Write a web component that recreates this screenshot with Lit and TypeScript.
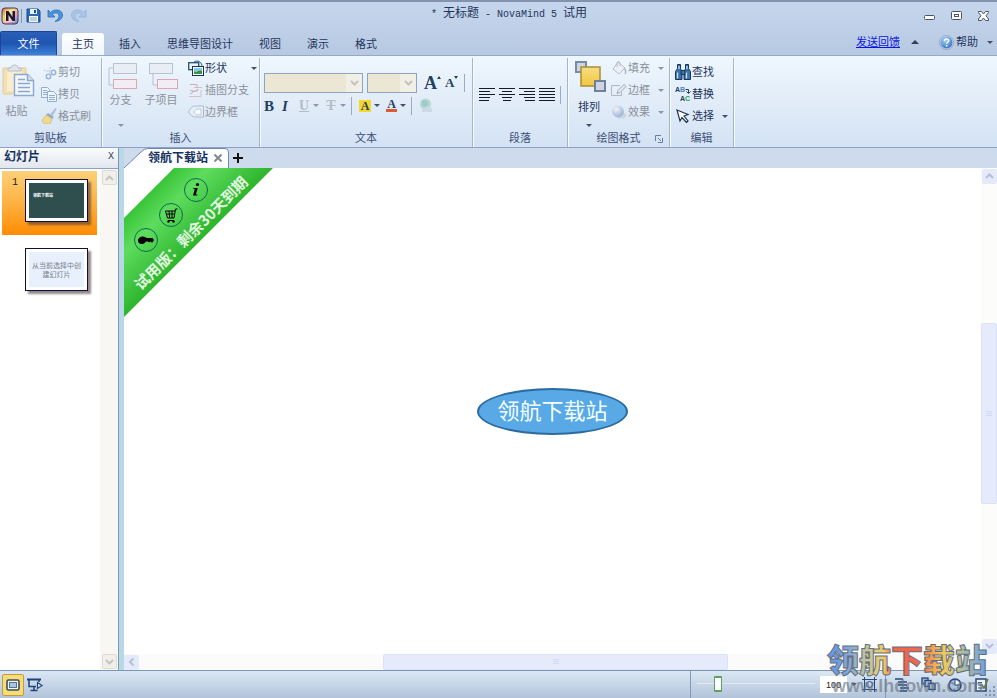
import { LitElement, html, svg, css, TemplateResult, SVGTemplateResult } from "lit";
import { customElement, state } from "lit/decorators.js";
import { classMap } from "lit/directives/class-map.js";

type Icon = { w: number; h: number; art: SVGTemplateResult };

const lines = (rows: number[][], color: string) =>
  rows.map(([x, y, w]) => svg`<rect x=${x} y=${y} width=${w} height="1" fill=${color}/>`);

const ICONS: Record<string, Icon> = {
  logo: { w: 18, h: 18, art: svg`<defs><linearGradient id="lg" x1="0" y1="0" x2="1" y2="1"><stop offset="0" stop-color="#e2574c"/><stop offset=".35" stop-color="#f3dc6a"/><stop offset=".65" stop-color="#e8a0c0"/><stop offset="1" stop-color="#4a8fd8"/></linearGradient></defs><rect x="1" y="1" width="16" height="16" rx="3" fill="url(#lg)" stroke="#4b3b50"/><rect x="4" y="3" width="10" height="12" fill="#fff" opacity=".4"/><path d="M5 14V4h2.500l4 6V4H14v10h-2.500l-4-6v6z" fill="#1c1a2c"/>` },
  save: { w: 15, h: 15, art: svg`<path d="M1 1h11l2 2v11H1z" fill="#2868b4" stroke="#1c4c8c"/><rect x="4" y="1" width="7" height="5" fill="#e8f0fa"/><rect x="8" y="2" width="2" height="3" fill="#1c4c8c"/><rect x="3" y="8" width="9" height="6" fill="#f4f8fc"/><path d="M4 10h7M4 12h7" stroke="#8aa6c8"/>` },
  undo: { w: 17, h: 14, art: svg`<path d="M1 1v7h7L5.500 5.500C8 3 12 3.500 12 7c0 2.500-2 4-4 5.500 4-.5 7.500-2.500 7.500-6.500C15.500 1 8-1 3.500 3.500z" fill="#4b94dc" stroke="#2c6cb4" stroke-width=".8"/>` },
  redo: { w: 17, h: 14, art: svg`<path d="M16 1v7H9l2.500-2.500C9 3 5 3.500 5 7c0 2.500 2 4 4 5.500C5 12 1.500 10 1.500 6 1.500 1 9-1 13.500 3.500z" fill="#a9c6e8" stroke="#90b2da" stroke-width=".8"/>` },
  min: { w: 11, h: 12, art: svg`<rect x=".5" y="5.500" width="10" height="4" rx="1" fill="#fff" stroke="#4a5468"/>` },
  max: { w: 11, h: 10, art: svg`<rect x=".5" y=".5" width="10" height="8" rx="1" fill="#fff" stroke="#4a5468"/><rect x="3.500" y="3.500" width="4" height="2" fill="#fff" stroke="#4a5468"/>` },
  close: { w: 11, h: 10, art: svg`<path d="M.5.5h3l2 2.500 2-2.500h3v1L8 4.800l2.500 3.200v1.500h-3l-2-2.500-2 2.500h-3V8L3 4.800.5 1.500z" fill="#fff" stroke="#4a5468"/>` },
  help: { w: 15, h: 15, art: svg`<defs><radialGradient id="hg" cx=".4" cy=".3" r=".8"><stop offset="0" stop-color="#a8d4f8"/><stop offset="1" stop-color="#2c6cc0"/></radialGradient></defs><circle cx="7.500" cy="7.500" r="7" fill="#d3e0f0" stroke="#8fa4c0"/><circle cx="7.500" cy="7.500" r="6" fill="url(#hg)"/><path d="M5.500 6c0-3 4.200-2.500 4.200-.3 0 1.500-2 1.500-2 3.100M7.700 10v1.400" fill="none" stroke="#fff" stroke-width="1.400"/>` },
  paste: { w: 33, h: 34, art: svg`<rect x="1" y="4" width="23" height="26" rx="1" fill="#f3dfb2" stroke="#e2cb98"/><rect x="5" y="7" width="15" height="20" fill="#f9edd0"/><path d="M6 7V4h3c0-4 7-4 7 0h3v3z" fill="#dfe4ec" stroke="#b4bfce"/><path d="M12.500 10.500h13l6 6v15h-19z" fill="#f1f6fd" stroke="#8ca8cf" stroke-width="1.400"/><path d="M25.500 10.500v6h6" fill="#d5e2f3" stroke="#8ca8cf" stroke-width="1.400"/><path d="M16 15.500h7M16 19.500h12M16 23.500h12M16 27.500h12" stroke="#8ca8cf" stroke-width="1.600"/>` },
  cut: { w: 16, h: 15, art: svg`<g fill="none" stroke="#9bb5d8" stroke-width="1.500"><circle cx="7.500" cy="11.500" r="2.200"/><circle cx="12.500" cy="7.500" r="2.200"/></g><path d="M8 9.500 9.500 2M10.500 7 2 5" stroke="#c3cedc" stroke-width="1.200" stroke-dasharray="2 1"/>` },
  copy: { w: 16, h: 15, art: svg`<g fill="#eef4fc" stroke="#93add0"><path d="M.5.5h6l2 2v8h-8z"/><path d="M6.500 4.500h6l3 3v7h-9z"/></g><path d="M2 3.500h4M2 5.500h4M2 7.500h4M8 8.500h6M8 10.500h6M8 12.500h6" stroke="#93add0"/>` },
  brush: { w: 16, h: 16, art: svg`<path d="M14.500 0 9.500 6l2 2 4-7z" fill="#a9bdd8"/><path d="m7 5 6 4-2 2-6-4z" fill="#8fa9cd"/><path d="M5 7 1 13l2 2.500 6 .5 2-5z" fill="#efd98e" stroke="#dcc47a"/>` },
  branch: { w: 30, h: 28, art: svg`<path d="M5 5H1v17h4" fill="none" stroke="#b9c0ce"/><rect x="5.500" y=".5" width="23" height="10" fill="#e9eef6" stroke="#b9c0ce"/><rect x="5.500" y="16.500" width="23" height="9" fill="#f2edf4" stroke="#dca7b4"/>` },
  child: { w: 30, h: 28, art: svg`<path d="M4 10v12h5" fill="none" stroke="#b9c0ce"/><rect x=".5" y=".5" width="23" height="10" fill="#e9eef6" stroke="#b9c0ce"/><rect x="8.500" y="16.500" width="20" height="9" fill="#f2edf4" stroke="#dca7b4"/>` },
  shapes: { w: 16, h: 16, art: svg`<circle cx="9" cy="6" r="5" fill="#e8f1fa" stroke="#2f5b78"/><rect x=".7" y="2.700" width="10" height="7" fill="#edf5fc" stroke="#27506e" stroke-width="1.300"/><rect x="4.500" y="6.500" width="11" height="9" fill="#fff" stroke="#173550"/><rect x="6" y="8" width="8" height="3" fill="#7ecbe8"/><path d="M6 14v-3c3 2 5-2 8 0v3z" fill="#3d8e3d"/>` },
  callout: { w: 16, h: 15, art: svg`<path d="M2 1.500h7v3" fill="none" stroke="#d9a9b4"/><path d="M1 13.500h12V7M6 4.500h8" fill="none" stroke="#cfc0cc"/><path d="M4 10c2-5 4 1 6-4" fill="none" stroke="#d9a9b4" stroke-width="1.400"/><path d="M2 7.500h3M2 10.500h2" stroke="#b9c0ce"/>` },
  boundary: { w: 16, h: 14, art: svg`<path d="M.5 7c2-4 4-6 7-6h8v11h-8c-3 0-5-2-7-5z" fill="#e6eef8" stroke="#aab9d0"/><path d="M6 7c1-2 2-3 4-3h3v6h-3c-2 0-3-1-4-3z" fill="#f5f8fd" stroke="#c0cbdd"/>` },
  globe: { w: 14, h: 15, art: svg`<circle cx="6.500" cy="6" r="5.500" fill="#b4dac8"/><path d="M3 3c2-2 5-1 6 1s-1 5-3 5S2 6 3 3" fill="#9ccbd0"/><path d="M7 9c2-2 5 0 6 2v3H3v-2z" fill="#cbd9e8"/>` },
  left: { w: 17, h: 14, art: svg`${lines([[0, 0, 16], [0, 3, 11], [0, 6, 16], [0, 9, 11], [0, 12, 10]], "#151b26")}` },
  center: { w: 17, h: 14, art: svg`${lines([[0, 0, 16], [3, 3, 10], [0, 6, 16], [3, 9, 10], [4, 12, 8]], "#151b26")}` },
  right: { w: 17, h: 14, art: svg`${lines([[0, 0, 16], [5, 3, 11], [0, 6, 16], [5, 9, 11], [6, 12, 10]], "#151b26")}` },
  justify: { w: 17, h: 14, art: svg`${lines([[0, 0, 16], [0, 3, 16], [0, 6, 16], [0, 9, 16], [0, 12, 16]], "#151b26")}` },
  arrange: { w: 32, h: 34, art: svg`<rect x="1" y="1" width="10" height="10" fill="#cdd5e2" stroke="#7a8aa5" stroke-width="2"/><defs><linearGradient id="yg" x1="0" y1="0" x2="0" y2="1"><stop offset="0" stop-color="#f7dd83"/><stop offset="1" stop-color="#f1c73f"/></linearGradient></defs><rect x="6" y="6" width="19" height="19" fill="url(#yg)" stroke="#a98d38" stroke-width="1.500"/><rect x="20" y="20" width="10" height="10" fill="#cdd5e2" stroke="#6f7f9c" stroke-width="2"/>` },
  fill: { w: 16, h: 14, art: svg`<path d="m7 1 7 6-6 6-6-5z" fill="#eceff4" stroke="#b7bec9"/><path d="M6 6V2c0-2 3-2 3 0v3" fill="none" stroke="#b7bec9"/><path d="M13 7c2 2 2 5 1 6" stroke="#a3b8d2" stroke-width="1.500" fill="none"/>` },
  outline: { w: 16, h: 13, art: svg`<path d="M9 1.500H.5v10h10V8" fill="none" stroke="#b0b8c6"/><path d="m6 9.500 1-3L13 .5l2 2-6 6z" fill="#e6ebf2" stroke="#9fa9b8"/>` },
  effect: { w: 16, h: 14, art: svg`<defs><radialGradient id="eg" cx=".35" cy=".3" r=".8"><stop offset="0" stop-color="#eef3fa"/><stop offset="1" stop-color="#93abd0"/></radialGradient></defs><ellipse cx="10" cy="10.500" rx="5.500" ry="3.300" fill="#ccd5e2"/><circle cx="7" cy="6.500" r="5.800" fill="url(#eg)"/>` },
  launcher: { w: 8, h: 8, art: svg`<path d="M.5 6V.5H6" fill="none" stroke="#6c7f9f"/><path d="M3 3l3 3M7.500 3v4.500H3" fill="none" stroke="#6c7f9f"/>` },
  find: { w: 16, h: 16, art: svg`<g fill="#3d73a8" stroke="#15365e"><path d="M2.500.5h3v4l1.500 3v8H.5v-8l2-3z"/><path d="M10.500.5h3v4l2 3v8H9v-8l1.500-3z"/><path d="M6 6.500h4v4H6z"/></g><path d="M2.500 8.500v6M11.500 8.500v6M4 2v3M12 2v3" stroke="#c6dff2" stroke-width="1.300"/>` },
  replace: { w: 16, h: 16, art: svg`<g font-family="Liberation Sans" font-weight="bold" font-size="7"><text x="0" y="6" fill="#1e3c66">A</text><text x="5" y="6" fill="#4a84c4">B</text><text x="5" y="15" fill="#1e3c66">A</text><text x="10" y="15" fill="#2f9e4f">C</text></g><path d="M10.500 3.500h3V7m-2-1.500 2 2 2-2" fill="none" stroke="#1e3c66"/>` },
  select: { w: 14, h: 14, art: svg`<path d="m1 1 11 4.500-4 1.500 4 5-1.500 1.500-4.500-5L4 12z" fill="#fff" stroke="#1e3550" stroke-width="1.200"/>` },
  slides: { w: 14, h: 12, art: svg`<rect x="1" y="1" width="12" height="10" rx="1.500" fill="#fdf6cf" stroke="#33506e" stroke-width="1.600"/><rect x="3.500" y="3.500" width="7" height="5" fill="#aac4e2" stroke="#4f759f"/>` },
  present: { w: 17, h: 14, art: svg`<path d="M0 1.500h14" stroke="#1f4379" stroke-width="2"/><path d="M2 2v6.500h7M12 2v2M7 9v3M3.500 12.500h7" fill="none" stroke="#1f4379" stroke-width="1.500"/><path d="m10.500 4.500 4.500 3-4.500 3z" fill="#e4ecf6" stroke="#1f4379" stroke-width="1.200"/>` },
  fit: { w: 15, h: 15, art: svg`<rect x="2.500" y="2.500" width="10" height="10" fill="#c6d7ea" stroke="#24487c"/><circle cx="7.500" cy="7.500" r="3" fill="none" stroke="#24487c"/><path d="M0 2.500h2M2.500 0v2M12.500 0v2M13 2.500h2M0 12.500h2M2.500 13v2M12.500 13v2M13 12.500h2" stroke="#24487c"/>` },
  outlineView: { w: 14, h: 14, art: svg`<path d="M0 1h8M3 4h9M3 7h9M5 10h9M5 13h7" stroke="#24487c" stroke-width="1.600"/>` },
  linkView: { w: 15, h: 15, art: svg`<g fill="#9fb9d8" stroke="#24487c" stroke-width="1.300"><rect x="1" y="1" width="6" height="6"/><rect x="4" y="3.500" width="6" height="6"/><rect x="8" y="6.500" width="6" height="6"/></g>` },
  clock: { w: 15, h: 14, art: svg`<circle cx="7" cy="7" r="6" fill="#a9c3e0" stroke="#24487c" stroke-width="1.600"/><path d="M7 7V1.500A5.500 5.500 0 0 1 12.500 7z" fill="#fff" stroke="#24487c"/>` },
  note: { w: 14, h: 14, art: svg`<rect x="1" y="1" width="10" height="12" fill="#eef4fb" stroke="#24487c" stroke-width="1.500"/><path d="M3 4.500h4M3 7h5M3 10h5" stroke="#24487c"/><path d="m7 7 2 3 4-9" fill="none" stroke="#6a7d3c" stroke-width="1.600"/>` },
  grip: { w: 10, h: 10, art: svg`<path d="M8 0h2v2H8zM4 4h2v2H4zM8 4h2v2H8zM0 8h2v2H0zM4 8h2v2H4zM8 8h2v2H8z" fill="#8397b4"/>` },
  info: { w: 24, h: 24, art: svg`<circle cx="12" cy="12" r="11.500" fill="none" stroke="#0b6b4f"/><circle cx="13.500" cy="6.500" r="1.600"/><path d="M9.500 10h4.300l-2 6.500h1.800l-.3 1H9l1.800-6.500H9.300z"/>` },
  cart: { w: 24, h: 24, art: svg`<circle cx="12" cy="12" r="11.500" fill="none" stroke="#0b6b4f"/><path d="M18.500 6h-2l-1.500 9H8.500L6.500 8H16M7.500 11h8M10 8l.7 7M13 8v7M15 17.500H9" fill="none" stroke="#000"/><circle cx="9.500" cy="18.500" r="1.200"/><circle cx="14.500" cy="18.500" r="1.200"/>` },
  key: { w: 24, h: 24, art: svg`<circle cx="12" cy="12" r="11.500" fill="none" stroke="#0b6b4f"/><path d="M4 13c0-3.500 3-4.500 5-4.500s3 1.200 4 1.500h5.500l1.500 2-1.500 2.500h-1l-1-1-1.500 1-1-1h-2c-1 2-3 2.500-4.500 2.500S4 15 4 13z"/>` },
  chev: { w: 9, h: 6, art: svg`<path d="m1 1 3.500 3.500L8 1" fill="none" stroke="currentColor" stroke-width="2"/>` },
};

const icon = (name: string, cls = "") => {
  const i = ICONS[name];
  return html`<svg class="ico ${cls}" width=${i.w} height=${i.h} viewBox="0 0 ${i.w} ${i.h}" aria-hidden="true">${i.art}</svg>`;
};
const drop = (cls = "") => html`<span class="drop ${cls}"></span>`;

const TABS = ["主页", "插入", "思维导图设计", "视图", "演示", "格式"];

@customElement("app-root")
export class AppRoot extends LitElement {
  @state() private tab = "主页";

  static styles = css`
    :host {
      display: flex; flex-direction: column; height: 100vh; overflow: hidden; position: relative;
      background: #fff; color: #1f355c;
      font: 11px/16px "Liberation Sans", "Noto Sans CJK SC", sans-serif;
    }
    * { box-sizing: border-box; }
    button, select, input { font: inherit; color: inherit; margin: 0; padding: 0; border: 0; background: none; }
    button { display: flex; align-items: center; white-space: nowrap; }
    .ico { display: block; flex: none; }
    .grow { flex: 1; }
    .off { color: #8b909a; }
    .drop { border: 3px solid transparent; border-top-color: #44506a; border-bottom: 0; flex: none; }
    .drop.up { border-top: 0; border-bottom: 4px solid #333f55; border-left-width: 4px; border-right-width: 4px; }
    .drop.pale { border-top-color: #8d97a8; }

    .head { background: linear-gradient(#c5d6ec, #b7c9e2); border-top: 2px solid #8393ae; border-bottom: 1px solid #96a8c6; }
    .titlebar { display: grid; grid-template-columns: 1fr auto 1fr; align-items: center; height: 27px; padding: 0 8px 0 1px; }
    .quick, .win { display: flex; align-items: center; gap: 6px; }
    .quick .bar { width: 1px; height: 14px; background: #8496b4; margin: 0 -2px 0 -4px; }
    .win { justify-content: flex-end; gap: 16px; }
    h1 { margin: 0 0 4px; font: 12px/16px "Noto Sans CJK SC", sans-serif; padding-left: 28px; }
    h1 .latin { font: 10px/16px "Liberation Mono", monospace; white-space: pre; }
    .tabs { display: flex; align-items: flex-end; height: 26px; padding-right: 4px; }
    .tab { height: 22px; padding: 0 13px; }
    .tab.on { padding: 0 10px; margin-right: 2px; background: linear-gradient(#fff, #eef6fd); border-radius: 3px 3px 0 0; }
    .file { width: 57px; height: 24px; justify-content: center; margin-right: 5px; color: #fff; border: 1px solid #1b4697; border-bottom: 0; border-radius: 2px 2px 0 0; background: linear-gradient(#2a5fb8, #1e55b0 50%, #3f83dc); }
    .aside { display: flex; align-items: center; align-self: center; height: 20px; }
    .aside a { color: #0a16e0; }
    .aside .up { margin: 0 20px 0 11px; }
    .help { gap: 2px; }
    .help .drop { margin-left: 7px; }

    .ribbon { display: flex; height: 92px; flex: none; background: linear-gradient(#eff7fe, #dde9f6 65%, #d3e2f4); border-bottom: 1px solid #8da2c4; }
    .group { display: flex; flex-direction: column; border-right: 1px solid #a4b5cf; box-shadow: 1px 0 #f7fbff; margin-top: 2px; }
    .group h2 { display: flex; align-items: center; justify-content: center; margin: 0; height: 18px; flex: none; font: inherit; color: #3b4f75; position: relative; }
    .group h2 button { position: absolute; right: 6px; bottom: 4px; }
    .body { display: flex; height: 71px; flex: none; }
    .clip { width: 102px; } .ins { width: 158px; } .txt { width: 213px; } .par { width: 95px; } .drw { width: 102px; } .edt { width: 64px; }
    .big { flex-direction: column; height: 71px; }
    .big .drop { margin-top: auto; margin-bottom: 2px; }
    .col { display: flex; flex-direction: column; }
    .col button { height: 22px; gap: 1px; }
    .col .slot { width: 16px; display: flex; justify-content: center; }
    .col .drop { margin-left: auto; }
    .clip .big { width: 33px; padding-top: 6px; gap: 5px; }
    .clip .big .ico { margin-left: 4px; }
    .clip .col { padding: 3px 0 0 8px; }
    .ins .big { width: 37px; padding-top: 5px; gap: 1px; }
    .ins .big .ico { margin-left: 5px; }
    .ins .big + .big { width: 44px; }
    .ins .col { width: 69px; margin-left: 5px; margin-top: -1px; }
    .drw .big { width: 38px; padding-top: 3px; gap: 4px; margin-left: 2px; }
    .drw .big .ico { margin-left: 4px; }
    .drw .col { width: 53px; margin-left: 3px; margin-top: -1px; }
    .edt .col { width: 53px; margin: 3px 0 0 5px; }

    .txt .body { flex-direction: column; padding: 14px 0 0 4px; gap: 2px; }
    .row { display: flex; align-items: center; height: 21px; }
    .combo { position: relative; height: 20px; border: 1px solid #8ea6bd; background: #ece7d5; margin-right: 4px; }
    .combo select { appearance: none; width: 100%; height: 100%; }
    .combo i { position: absolute; right: 0; top: 0; bottom: 0; width: 16px; display: grid; place-items: center; background: #f2efe6; color: #c6c3b8; pointer-events: none; }
    .family { width: 100px; } .size { width: 50px; }
    .serif { font-family: "Liberation Serif", serif; font-weight: bold; color: #24405f; }
    .bigA { font-size: 18px; width: 16px; margin-left: 3px; } .smallA { font-size: 13px; width: 14px; margin-left: 5px; }
    .mark { align-self: flex-start; border: 2px solid transparent; border-top: 0; border-bottom: 3px solid #24405f; margin-top: 1px; }
    .mark.down { border-bottom: 0; border-top: 3px solid #24405f; }
    .bi { font-size: 15px; width: 16px; }
    .it { font-style: italic; padding-left: 2px; }
    .pale { color: #b4bcc8; }
    .u { font-size: 14px; width: 12px; justify-content: center; margin-left: 2px; text-decoration: underline; }
    .st { text-decoration: line-through; margin-left: 6px; }
    .row .drop { margin-left: 3px; }
    .sep { width: 1px; height: 18px; background: #9aaac4; margin: 0 7px 0 5px; }
    .hl { width: 12px; height: 12px; font-size: 12px; justify-content: center; background: #f4d62c; }
    .fc { width: 11px; height: 12px; font-size: 12px; justify-content: center; border-bottom: 3px solid #dc5a34; margin-left: 6px; line-height: 8px; }
    .par .body { align-items: center; padding: 3px 0 0 6px; gap: 3px; }
    .par .sep { margin: 0 0 0 1px; }

    .work { display: flex; flex: 1; min-height: 0; }
    .panel { width: 119px; display: flex; flex-direction: column; border-right: 1px solid #7c98b4; }
    .panel header { display: flex; justify-content: space-between; align-items: center; height: 21px; padding: 0 4px 2px; background: linear-gradient(#fafbfd, #e2e6ee); border-bottom: 1px solid #8ba1bd; color: #16335f; }
    .panel header b { font-size: 12px; }
    .panel header button { font: 10px/16px "Liberation Mono", monospace; color: #30435f; }
    .pane { display: flex; flex: 1; min-height: 0; }
    .list { flex: 1; padding: 2px 3px 0 2px; display: flex; flex-direction: column; gap: 5px; }
    .slide { position: relative; height: 64px; width: 100%; padding: 8px 0 0 23px; align-items: flex-start; color: #222; }
    .slide.on { background: linear-gradient(#fdd078, #fdb548 45%, #ff8c04); }
    .slide .n { position: absolute; left: 10px; top: 4px; font: 10px/16px "Liberation Mono", monospace; }
    .thumb { width: 63px; height: 43px; border: 1px solid #150c38; padding: 3px; background: #fff; box-shadow: 3px 3px 2px #4a3a3a99; }
    .shot { display: block; height: 35px; background: #2f4f4f; color: #fff; text-align: left; padding: 9px 0 0 4px; font-size: 4px; line-height: 8px; font-weight: bold; }
    .new { display: grid; place-content: center; height: 35px; background: #e8f0fd; color: #7b8088; font-size: 7px; line-height: 9px; text-align: center; }
    .split { width: 5px; background: #b8d8e6; }

    .sbtn { display: grid; place-items: center; width: 15px; height: 15px; flex: none; border-radius: 2px; background: #e4eafa; color: #b4c0da; }
    .vs { display: grid; width: 16px; grid-template-rows: 16px 139fr 180fr 134fr 16px; background: #fcfcfa; justify-items: center; align-items: center; }
    .hs { display: grid; height: 16px; grid-template-columns: 16px 243fr 345fr 238fr 16px 15px; background: #fbfbfb; align-items: center; }
    .thumbbar { display: grid; place-items: center; width: 100%; height: 100%; border-radius: 2px; background: #e6ebfc; border: 1px solid #dbe2f7; }
    .thumbbar i { width: 6px; height: 6px; background: repeating-linear-gradient(#d0d9f2 0 1px, transparent 1px 2px); }
    .side { width: 18px; display: flex; flex-direction: column; justify-content: space-between; padding: 1px 2px; background: #f8f7f3; }
    .side .sbtn { background: #f0efe9; color: #c5c4bf; border: 1px solid #dedcd5; }
    .upside { transform: rotate(180deg); } .leftside { transform: rotate(90deg); }

    .doc { flex: 1; display: flex; flex-direction: column; min-width: 0; }
    .docs { display: flex; height: 20px; background: #cddbed; }
    .doctab { display: flex; align-items: center; height: 20px; width: 105px; padding: 0 7px 1px 24px; gap: 4px; position: relative; color: #16335f; font-weight: bold; font-size: 12px; justify-content: space-between; white-space: nowrap; }
    .doctab svg.shape { position: absolute; inset: 0; }
    .doctab > * { position: relative; }
    .plus { padding: 0 4px; }
    .view { flex: 1; display: flex; min-height: 0; }
    .canvas { flex: 1; display: grid; place-items: center; position: relative; }
    .ribbonmark { position: absolute; left: 0; top: 0; }
    .trial { font: bold 15px "Noto Sans CJK SC", sans-serif; fill: #e2f8e0; }
    .node { width: 151px; height: 47px; padding-bottom: 4px; display: grid; place-items: center; border: 2px solid #2b6ba0; border-radius: 50%; background: #58a9e6; color: #f4feff; font: 22px/28px "Noto Sans CJK SC", sans-serif; }

    .status { display: flex; align-items: center; height: 28px; flex: none; padding: 0 2px; border-top: 1px solid #7c96b6; background: linear-gradient(#dbe7f4, #b2c4da); position: relative; }
    .modes { display: flex; gap: 3px; align-items: center; }
    .modes button:first-child { width: 22px; height: 22px; justify-content: center; background: #f8dc74; border: 1px solid #c49a3c; border-radius: 2px; }
    .status .line { width: 1px; height: 27px; background: #8399b8; }
    .zoom { appearance: none; width: 118px; height: 18px; margin: 0 5px 2px 6px; }
    .zoom::-webkit-slider-runnable-track { height: 16px; background: linear-gradient(#e2eaf4, #e2eaf4) center / 100% 1px no-repeat; }
    .zoom::-webkit-slider-thumb { appearance: none; width: 8px; height: 16px; background: #fff; border: 1px solid #5fa05f; border-width: 2px 1px; border-radius: 1px; }
    .pct { width: 27px; height: 17px; background: #fff; text-align: center; color: #222; font-size: 9px; }
    .views { display: flex; align-items: center; gap: 12px; padding: 0 6px 0 8px; }
    .views .line { margin-right: -3px; }
    .spin { display: grid; padding: 0 5px 0 4px; }
    .grip { position: absolute; right: 2px; bottom: 2px; }
    .wm { position: absolute; right: 4px; bottom: 0; pointer-events: none; }
    .wm .cn { font: 900 32px "Noto Sans CJK SC", sans-serif; }
    .wm .url { font: bold 18px "Liberation Sans", sans-serif; }
  `;

  private item(name: string, label: string, off = false, arrow = false): TemplateResult {
    return html`<button class=${classMap({ off })}><span class="slot">${icon(name)}</span>${label}${arrow ? drop(off ? "pale" : "") : ""}</button>`;
  }

  private ribbon() {
    return html`<section class="ribbon">
      <div class="group clip"><div class="body">
        <button class="big off">${icon("paste")}粘贴</button>
        <div class="col">${this.item("cut", "剪切", true)}${this.item("copy", "拷贝", true)}${this.item("brush", "格式刷", true)}</div>
      </div><h2>剪贴板</h2></div>
      <div class="group ins"><div class="body">
        <button class="big off">${icon("branch")}分支${drop("pale")}</button>
        <button class="big off">${icon("child")}子项目</button>
        <div class="col">${this.item("shapes", "形状", false, true)}${this.item("callout", "插图分支", true)}${this.item("boundary", "边界框", true)}</div>
      </div><h2>插入</h2></div>
      <div class="group txt"><div class="body">
        <div class="row">
          <div class="combo family"><select aria-label="字体" disabled></select><i>${icon("chev")}</i></div>
          <div class="combo size"><select aria-label="字号" disabled></select><i>${icon("chev")}</i></div>
          <button class="serif bigA" aria-label="增大字号">A<span class="mark"></span></button>
          <button class="serif smallA" aria-label="减小字号">A<span class="mark down"></span></button>
          <span class="sep"></span>
        </div>
        <div class="row">
          <button class="serif bi">B</button><button class="serif bi it">I</button>
          <button class="serif u pale">U</button>${drop("pale")}
          <button class="serif u st pale">T</button>${drop("pale")}
          <span class="sep"></span>
          <button class="serif hl">A</button>${drop()}
          <button class="serif fc">A</button>${drop()}
          <span class="sep"></span>
          <button aria-label="超链接">${icon("globe")}</button>
        </div>
      </div><h2>文本</h2></div>
      <div class="group par"><div class="body">
        ${[["left", "左对齐"], ["center", "居中"], ["right", "右对齐"], ["justify", "两端对齐"]].map(([i, l]) => html`<button aria-label=${l}>${icon(i)}</button>`)}
        <span class="sep"></span>
      </div><h2>段落</h2></div>
      <div class="group drw"><div class="body">
        <button class="big">${icon("arrange")}排列${drop()}</button>
        <div class="col">${this.item("fill", "填充", true, true)}${this.item("outline", "边框", true, true)}${this.item("effect", "效果", true, true)}</div>
      </div><h2><span>绘图格式</span><button aria-label="更多格式">${icon("launcher")}</button></h2></div>
      <div class="group edt"><div class="body">
        <div class="col">${this.item("find", "查找")}${this.item("replace", "替换")}${this.item("select", "选择", false, true)}</div>
      </div><h2>编辑</h2></div>
    </section>`;
  }

  private watermark() {
    return html`<svg class="wm" width="168" height="74" viewBox="0 0 168 74" aria-hidden="true">
      <defs><linearGradient id="wg" gradientUnits="userSpaceOnUse" x1="0" y1="0" x2="162" y2="0">
        <stop offset="0" stop-color="#5b93ea"/><stop offset=".14" stop-color="#7ea6e0"/><stop offset=".24" stop-color="#b9c1a4"/>
        <stop offset=".36" stop-color="#f0cf66"/><stop offset=".42" stop-color="#f2664e"/><stop offset=".58" stop-color="#f2664e"/>
        <stop offset=".72" stop-color="#f6c850"/><stop offset=".84" stop-color="#b4bf9c"/><stop offset="1" stop-color="#6f9fe4"/>
      </linearGradient></defs>
      <text class="cn" x="2" y="48" fill="url(#wg)" stroke="#66707c" stroke-width="1">领航下载站</text>
      <text class="url" x="7" y="68" fill="#6a7584" fill-opacity=".65">www.lhdown.com</text>
    </svg>`;
  }

  render() {
    return html`
      <header class="head">
        <div class="titlebar">
          <div class="quick">${icon("logo")}<span class="bar"></span>
            <button aria-label="保存">${icon("save")}</button><button aria-label="撤销">${icon("undo")}</button><button aria-label="重做">${icon("redo")}</button></div>
          <h1><span class="latin">* </span>无标题<span class="latin"> - NovaMind 5 </span>试用</h1>
          <div class="win"><button aria-label="最小化">${icon("min")}</button><button aria-label="最大化">${icon("max")}</button><button aria-label="关闭">${icon("close")}</button></div>
        </div>
        <nav class="tabs">
          <button class="file">文件</button>
          ${TABS.map((t) => html`<button class=${classMap({ tab: true, on: t === this.tab })} @click=${() => (this.tab = t)}>${t}</button>`)}
          <span class="grow"></span>
          <div class="aside"><a href="#feedback">发送回馈</a>${drop("up")}<button class="help">${icon("help")}帮助${drop()}</button></div>
        </nav>
      </header>
      ${this.ribbon()}
      <main class="work">
        <aside class="panel">
          <header><b>幻灯片</b><button aria-label="关闭面板">X</button></header>
          <div class="pane">
            <div class="list">
              <button class="slide on"><span class="n">1</span><span class="thumb"><span class="shot">领航下载站</span></span></button>
              <button class="slide"><span class="thumb"><span class="new">从当前选择中创<br>建幻灯片</span></span></button>
            </div>
            <div class="side"><button class="sbtn" aria-label="向上">${icon("chev", "upside")}</button><button class="sbtn" aria-label="向下">${icon("chev")}</button></div>
          </div>
        </aside>
        <div class="split"></div>
        <section class="doc">
          <div class="docs">
            <div class="doctab">
              <svg class="shape" width="106" height="20"><path d="M0 20 17 4Q20 .5 24 .5H101Q104.500.5 104.500 4V20" fill="#fcfdff" stroke="#7089ae"/></svg>
              <span>领航下载站</span>
              <button aria-label="关闭文档"><svg width="8" height="8"><path d="M.5.5l7 7M7.500.5l-7 7" stroke="#83878f" stroke-width="2"/></svg></button>
            </div>
            <button class="plus" aria-label="新建文档"><svg width="10" height="10"><path d="M5 0v10M0 5h10" stroke="#111" stroke-width="2"/></svg></button>
          </div>
          <div class="view">
            <div class="canvas">
              <svg class="ribbonmark" width="150" height="150">
                <defs><linearGradient id="gg" gradientUnits="userSpaceOnUse" x1="25" y1="25" x2="75" y2="75">
                  <stop offset="0" stop-color="#38c438"/><stop offset=".35" stop-color="#5edc5e"/><stop offset="1" stop-color="#2cb42c"/></linearGradient></defs>
                <path d="M0 50 50 0H149L0 149z" fill="url(#gg)"/>
                <g transform="translate(60 10)">${ICONS.info.art}</g>
                <g transform="translate(35 35)">${ICONS.cart.art}</g>
                <g transform="translate(10 60)">${ICONS.key.art}</g>
                <text class="trial" transform="translate(17 123) rotate(-45)">试用版：剩余30天到期</text>
              </svg>
              <div class="node">领航下载站</div>
            </div>
            <div class="vs">
              <button class="sbtn" aria-label="向上">${icon("chev", "upside")}</button><span></span>
              <span class="thumbbar"><i></i></span><span></span>
              <button class="sbtn" aria-label="向下">${icon("chev")}</button>
            </div>
          </div>
          <div class="hs">
            <button class="sbtn" aria-label="向左">${icon("chev", "leftside")}</button><span></span>
            <span class="thumbbar"><i></i></span>
          </div>
        </section>
      </main>
      <footer class="status">
        <div class="modes"><button aria-label="幻灯片">${icon("slides")}</button><button aria-label="演示">${icon("present")}</button></div>
        <span class="grow"></span><span class="line"></span>
        <input class="zoom" type="range" min="0" max="600" value="90" aria-label="缩放">
        <input class="pct" value="100" aria-label="缩放比例">
        <div class="spin">${drop()}</div>
        <button aria-label="适合窗口">${icon("fit")}</button>
        <div class="views"><span class="line"></span>
          <button aria-label="大纲">${icon("outlineView")}</button><button aria-label="链接">${icon("linkView")}</button>
          <button aria-label="时间">${icon("clock")}</button><button aria-label="备注">${icon("note")}</button></div>
        ${icon("grip", "grip")}
      </footer>
      ${this.watermark()}`;
  }
}
